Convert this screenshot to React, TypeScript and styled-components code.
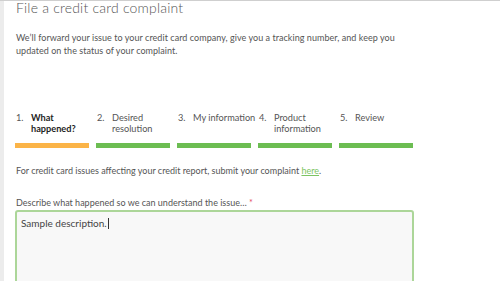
import React from 'react';
import styled, {createGlobalStyle} from 'styled-components';

const Global = createGlobalStyle`
	html, body {
		margin: 0;
		padding: 0;
		background: #ffffff;
	}
	body {
		font-family: Lato, "Noto Sans", sans-serif;
		color: #555555;
	}
`;

const Page = styled.div`
	display: flex;
	height: 100vh;
	overflow: hidden;
	border-top: 1px solid #cfcfcf;
	box-sizing: border-box;
`;

const Gutter = styled.div`
	width: 4px;
	background: #ececec;
	flex: none;
`;

const Main = styled.main`
	flex: 1;
	padding: 0 0 0 11px;
	max-width: 399px;
`;

const Title = styled.h1`
	margin: 0 0 0 1px;
	font-size: 14px;
	line-height: 14px;
	font-weight: 300;
	color: #555555;
	letter-spacing: 0.2px;
`;

const Intro = styled.p`
	margin: 16px 0 0 1px;
	font-size: 9px;
	line-height: 13px;
	color: #555555;
	letter-spacing: 0.05px;
`;

const Steps = styled.ol`
	list-style: none;
	margin: 56px 0 0 0;
	padding: 0;
	display: grid;
	grid-template-columns: repeat(5, 74px);
	column-gap: 7px;
`;

const Step = styled.li`
	display: flex;
	flex-direction: column;
`;

const StepLabel = styled.div<{$active?: boolean}>`
	display: flex;
	font-size: 9.2px;
	line-height: 10.5px;
	height: 21px;
	padding-left: 1px;
	white-space: nowrap;
	color: ${p => (p.$active ? '#1e1e1e' : '#555555')};
	font-weight: ${p => (p.$active ? 700 : 400)};
`;

const StepNum = styled.span`
	width: 15px;
	flex: none;
	font-weight: 400;
	color: #555555;
`;

const Bar = styled.div<{$color: string}>`
	height: 5px;
	margin-top: 9px;
	background: ${p => p.$color};
`;

const Note = styled.p`
	margin: 16px 0 0 1px;
	font-size: 9px;
	line-height: 13px;
	color: #555555;
`;

const Link = styled.a`
	color: #7cc462;
	text-decoration: underline;
`;

const Field = styled.div`
	margin-top: 20px;
`;

const Label = styled.label`
	display: block;
	margin-left: 1px;
	font-size: 9px;
	line-height: 12px;
	color: #555555;
`;

const Required = styled.span`
	color: #e34b63;
`;

const TextArea = styled.div`
	margin-top: 1px;
	height: 90px;
	border: 2px solid #acd699;
	border-radius: 3px;
	background: #f8f8f8;
	padding: 5px 4px;
	box-sizing: border-box;
	font-size: 10px;
	line-height: 13px;
	color: #444444;
`;

const Caret = styled.span`
	display: inline-block;
	width: 1px;
	height: 11px;
	background: #333333;
	vertical-align: -2px;
	margin-left: 1px;
`;

const steps = [
	{n: '1.', label: ['What', 'happened?'], active: true},
	{n: '2.', label: ['Desired', 'resolution']},
	{n: '3.', label: ['My information']},
	{n: '4.', label: ['Product', 'information']},
	{n: '5.', label: ['Review']},
];

const App = () => (
	<>
		<Global />
		<Page>
			<Gutter />
			<Main>
				<Title>File a credit card complaint</Title>
				<Intro>
					We’ll forward your issue to your credit card company, give you a tracking number, and keep you
					updated on the status of your complaint.
				</Intro>
				<Steps>
					{steps.map(s => (
						<Step key={s.n}>
							<StepLabel $active={s.active}>
								<StepNum>{s.n}</StepNum>
								<span>
									{s.label.map(l => (
										<div key={l}>{l}</div>
									))}
								</span>
							</StepLabel>
							<Bar $color={s.active ? '#fbb448' : '#6cbd52'} />
						</Step>
					))}
				</Steps>
				<Note>
					For credit card issues affecting your credit report, submit your complaint <Link href="#">here</Link>.
				</Note>
				<Field>
					<Label>
						Describe what happened so we can understand the issue… <Required>*</Required>
					</Label>
					<TextArea>
						Sample description.<Caret />
					</TextArea>
				</Field>
			</Main>
		</Page>
	</>
);

export default App;
